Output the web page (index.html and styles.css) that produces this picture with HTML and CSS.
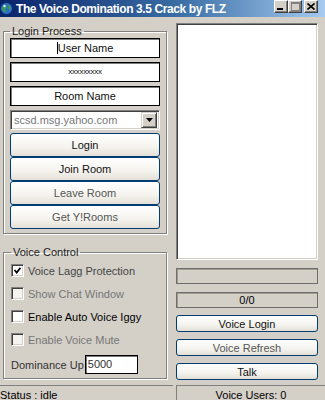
FILE: index.html
```html
<!DOCTYPE html>
<html lang="en">
<head>
    <meta charset="UTF-8">
    <meta name="viewport" content="width=device-width, initial-scale=1.0">
    <title>The Voice Domination 3.5 Crack by FLZ</title>
    <link rel="stylesheet" href="styles.css">
</head>
<body>
    <div class="window">
        <div class="titlebar">
            <svg class="app-icon" width="13" height="13" viewBox="0 0 13 13">
                <circle cx="6.5" cy="6.5" r="6" fill="#2f6fc4" stroke="#0b2a66" stroke-width="1"/>
                <path d="M3 4 L6 3 L7 5 L5 7 L6 10 L4 10 L2 7 Z" fill="#3ca04a"/>
                <path d="M8 3 L10 4 L11 7 L9 8 Z" fill="#3ca04a"/>
                <circle cx="4.5" cy="4" r="1.2" fill="#cfe6ff"/>
            </svg>
            <span class="title">The Voice Domination 3.5 Crack by FLZ</span>
            <div class="caption-buttons">
                <div class="cap-btn">
                    <svg width="8" height="7" viewBox="0 0 8 7"><rect x="0" y="5" width="6" height="2" fill="#000"/></svg>
                </div>
                <div class="cap-btn">
                    <svg width="9" height="9" viewBox="0 0 9 9"><rect x="0.5" y="0.5" width="8" height="8" fill="none" stroke="#808080"/><rect x="0" y="0" width="9" height="2" fill="#808080"/></svg>
                </div>
                <div class="cap-btn close">
                    <svg width="8" height="7" viewBox="0 0 8 7"><path d="M0.5 0.5 L7.5 6.5 M7.5 0.5 L0.5 6.5" stroke="#000" stroke-width="1.6"/></svg>
                </div>
            </div>
        </div>

        <div class="main">
            <div class="left">
                <fieldset class="group login">
                    <legend>Login Process</legend>
                    <div class="field"><span class="caret"></span>User Name</div>
                    <div class="field pass">xxxxxxxxx</div>
                    <div class="field">Room Name</div>
                    <div class="combo">
                        <span class="combo-text">scsd.msg.yahoo.com</span>
                        <span class="drop">
                            <svg width="7" height="4" viewBox="0 0 7 4"><path d="M0 0 H7 L3.5 4 Z" fill="#000"/></svg>
                        </span>
                    </div>
                    <div class="btn-stack">
                        <button class="btn">Login</button>
                        <button class="btn">Join Room</button>
                        <button class="btn dim">Leave Room</button>
                        <button class="btn dim">Get Y!Rooms</button>
                    </div>
                </fieldset>

                <fieldset class="group voice">
                    <legend>Voice Control</legend>
                    <label class="check">
                        <span class="box">
                            <svg width="7" height="7" viewBox="0 0 7 7"><path d="M0.5 3 L2.7 5.5 L6.5 0.8" fill="none" stroke="#000" stroke-width="1.8"/></svg>
                        </span>
                        <span class="soft">Voice Lagg Protection</span>
                    </label>
                    <label class="check off">
                        <span class="box"></span>
                        <span>Show Chat Window</span>
                    </label>
                    <label class="check">
                        <span class="box"></span>
                        <span>Enable Auto Voice Iggy</span>
                    </label>
                    <label class="check off">
                        <span class="box"></span>
                        <span>Enable Voice Mute</span>
                    </label>
                    <div class="dominance">
                        <span>Dominance Up</span>
                        <span class="num">5000</span>
                    </div>
                </fieldset>
            </div>

            <div class="right">
                <div class="listbox"></div>
                <div class="panel"></div>
                <div class="panel">0/0</div>
                <button class="btn small">Voice Login</button>
                <button class="btn small dim">Voice Refresh</button>
                <button class="btn small">Talk</button>
            </div>
        </div>

        <div class="statusbar">
            <div class="status-left">Status : idle</div>
            <div class="status-right">Voice Users: 0</div>
        </div>
    </div>
</body>
</html>
```

FILE: styles.css
```css
/* classic windows dialog look */
body {
    margin: 0;
    background-color: #d4d0c8;
    font-family: 'Liberation Sans', Arial, sans-serif;
    font-size: 11px;
    color: #000;
}

.window {
    width: 325px;
    height: 400px;
    display: flex;
    flex-direction: column;
    overflow: hidden;
}

/* title bar */
.titlebar {
    height: 17px;
    flex-shrink: 0;
    display: flex;
    align-items: center;
    background: linear-gradient(to right, #0a246a 0%, #3a6ea5 55%, #a6caf0 100%);
    color: #fff;
}

.app-icon {
    margin-right: 3px;
    flex-shrink: 0;
}

.title {
    flex: 1;
    font-weight: bold;
    font-size: 12px;
    letter-spacing: -0.4px;
    white-space: nowrap;
}

.caption-buttons {
    display: flex;
    align-self: flex-start;
    margin-right: 7px;
}

.cap-btn {
    width: 14px;
    height: 13px;
    box-sizing: border-box;
    background-color: #d4d0c8;
    border-top: 1px solid #fff;
    border-left: 1px solid #fff;
    border-right: 1px solid #404040;
    border-bottom: 1px solid #404040;
    box-shadow: inset -1px -1px 0 #808080;
    display: flex;
    align-items: center;
    justify-content: center;
}

.cap-btn.close {
    margin-left: 2px;
}

/* main area */
.main {
    flex: 1;
    display: flex;
    gap: 9px;
    padding: 0 7px 0 3px;
}

.left {
    width: 164px;
    flex-shrink: 0;
}

.right {
    flex: 1;
    display: flex;
    flex-direction: column;
    margin-top: 6px;
}

/* group boxes */
.group {
    margin: 0;
    border: 1px solid #808080;
    box-shadow: inset 1px 1px 0 #fff, 1px 1px 0 #fff;
    min-width: 0;
}

.group legend {
    padding: 0 2px;
    line-height: 13px;
    color: #222;
}

.login {
    margin-top: 8px;
    padding: 0 6px 4px;
}

.voice {
    margin-top: 12px;
    padding: 0 6px 4px 7px;
}

/* text fields */
.field {
    height: 20px;
    box-sizing: border-box;
    margin-bottom: 4px;
    background-color: #fff;
    border: 1px solid #000;
    box-shadow: inset 1px 1px 0 #7a7a7a;
    text-align: center;
    line-height: 18px;
    color: #111;
}

.field.pass {
    font-size: 8px;
    letter-spacing: -0.3px;
}

.caret {
    display: inline-block;
    width: 1px;
    height: 12px;
    background-color: #000;
    vertical-align: -2px;
}

.combo {
    height: 20px;
    box-sizing: border-box;
    display: flex;
    align-items: center;
    background-color: #fff;
    border-top: 1px solid #808080;
    border-left: 1px solid #808080;
    border-right: 1px solid #fff;
    border-bottom: 1px solid #fff;
    box-shadow: inset 1px 1px 0 #404040, inset -1px -1px 0 #d4d0c8;
    padding: 2px;
}

.combo-text {
    flex: 1;
    color: #777;
    padding-left: 1px;
}

.drop {
    width: 16px;
    height: 16px;
    box-sizing: border-box;
    background-color: #d4d0c8;
    border-top: 1px solid #d4d0c8;
    border-left: 1px solid #d4d0c8;
    border-right: 1px solid #404040;
    border-bottom: 1px solid #404040;
    box-shadow: inset 1px 1px 0 #fff, inset -1px -1px 0 #808080;
    display: flex;
    align-items: center;
    justify-content: center;
}

/* xp style push buttons */
.btn-stack {
    margin-top: 3px;
}

.btn {
    display: block;
    width: 100%;
    height: 24px;
    margin: 0;
    padding: 0;
    border: 1px solid #003c74;
    border-radius: 3px;
    background: linear-gradient(to bottom, #ffffff 0%, #f4f3ee 60%, #e3e0d6 100%);
    font-family: 'Liberation Sans', Arial, sans-serif;
    font-size: 11px;
    color: #111;
    cursor: pointer;
}

.btn.dim {
    color: #555;
}

.btn.small {
    height: 17px;
    margin-top: 7px;
    line-height: 14px;
}

/* check boxes */
.check {
    height: 23px;
    display: flex;
    align-items: center;
    gap: 4px;
}

.check.off {
    color: #777;
}

.soft {
    color: #444;
}

.box {
    width: 13px;
    height: 13px;
    box-sizing: border-box;
    background-color: #fff;
    border-top: 1px solid #808080;
    border-left: 1px solid #808080;
    border-right: 1px solid #fff;
    border-bottom: 1px solid #fff;
    box-shadow: inset 1px 1px 0 #404040, inset -1px -1px 0 #d4d0c8;
    display: flex;
    align-items: center;
    justify-content: center;
}

.check.off .box {
    background-color: #f4f3f0;
}

.dominance {
    margin-top: 4px;
    height: 19px;
    display: flex;
    align-items: center;
    gap: 1px;
    color: #333;
}

.num {
    width: 53px;
    height: 19px;
    box-sizing: border-box;
    background-color: #fff;
    border: 1px solid #000;
    box-shadow: inset 1px 1px 0 #7a7a7a;
    line-height: 17px;
    padding-left: 2px;
    color: #333;
}

/* right column */
.listbox {
    height: 237px;
    box-sizing: border-box;
    background-color: #fff;
    border-top: 1px solid #808080;
    border-left: 1px solid #808080;
    border-right: 1px solid #fff;
    border-bottom: 1px solid #fff;
    box-shadow: inset 1px 1px 0 #404040, inset -1px -1px 0 #d4d0c8;
}

.panel {
    height: 16px;
    box-sizing: border-box;
    margin-top: 8px;
    border: 1px solid #6d6d6d;
    box-shadow: inset 1px 1px 0 #a09c94;
    text-align: center;
    line-height: 14px;
}

/* status bar */
.statusbar {
    height: 15px;
    flex-shrink: 0;
    display: flex;
    gap: 3px;
}

.status-left,
.status-right {
    border-top: 1px solid #808080;
    border-left: 1px solid #808080;
    line-height: 14px;
    padding-top: 2px;
    white-space: nowrap;
}

.status-left {
    width: 175px;
    margin-left: -2px;
    padding-left: 1px;
    box-sizing: border-box;
}

.status-right {
    flex: 1;
    text-align: center;
}
```
